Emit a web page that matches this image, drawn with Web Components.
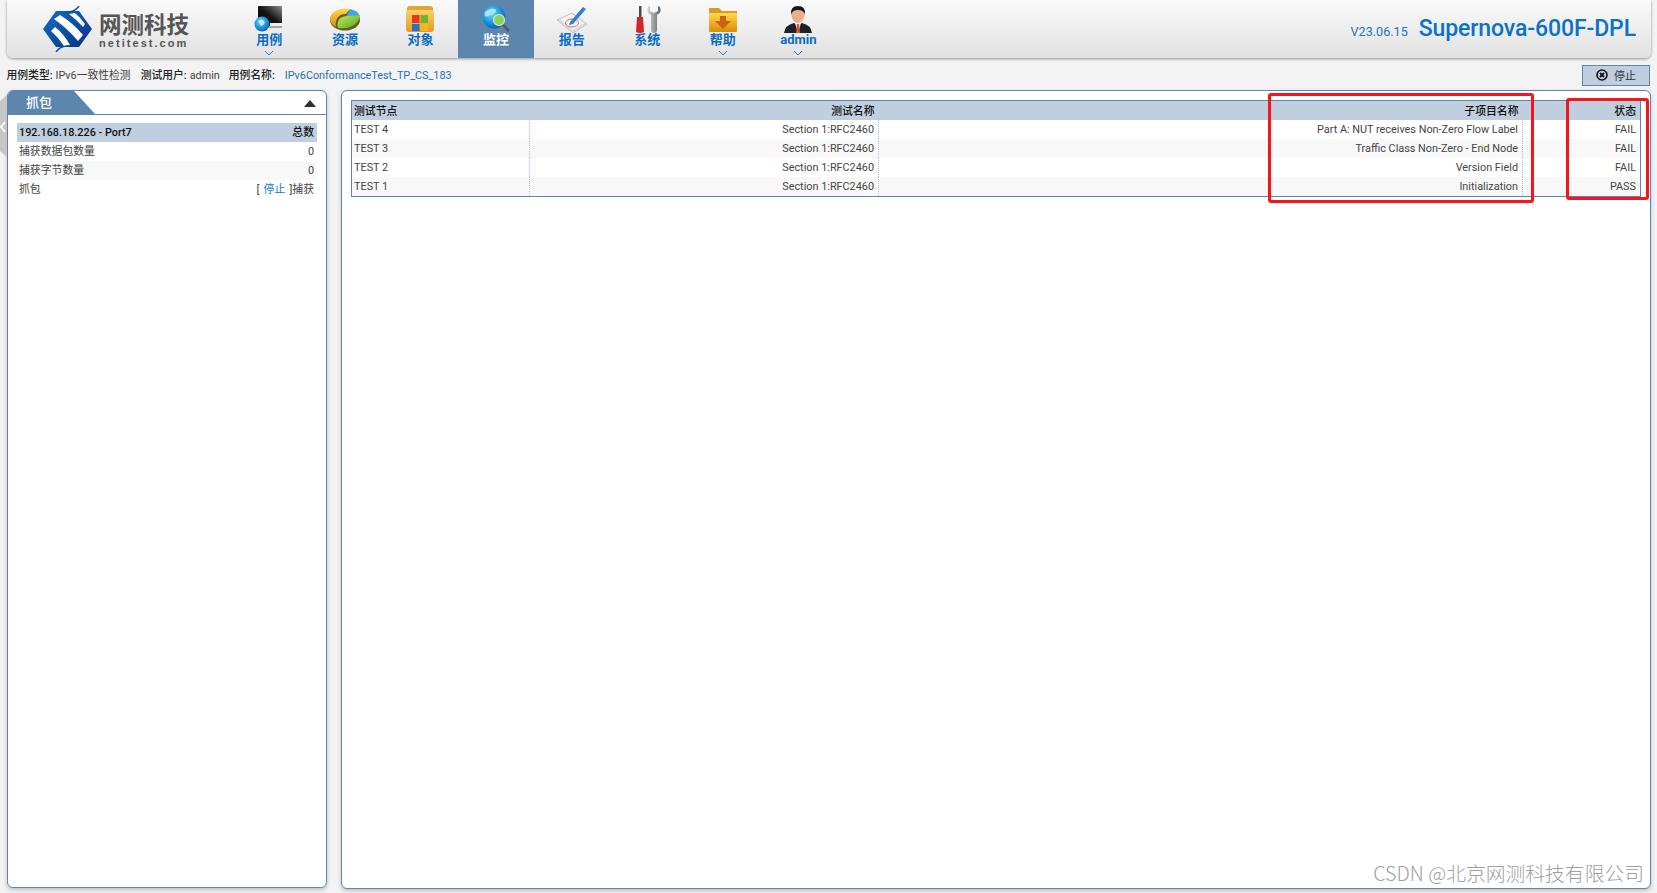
<!DOCTYPE html>
<html lang="zh">
<head>
<meta charset="utf-8">
<title>Supernova</title>
<style>
  html, body { margin: 0; height: 100%; background: #f3f3f3; overflow: hidden; }
  body { font: 10.85px Roboto, "Noto Sans CJK SC", sans-serif; color: #444; }
  svg { display: block; }
</style>
</head>
<body>
<svg width="0" height="0" style="position:absolute">
  <defs>
    <linearGradient id="g-screen" x1="1" y1="0" x2="0" y2="1"><stop offset="0" stop-color="#8a8a8a"/><stop offset=".5" stop-color="#141414"/><stop offset="1" stop-color="#050505"/></linearGradient>
    <radialGradient id="g-globe" cx=".4" cy=".35" r=".7"><stop offset="0" stop-color="#7fd6f7"/><stop offset=".55" stop-color="#1b9be0"/><stop offset="1" stop-color="#0a5aa8"/></radialGradient>
    <linearGradient id="g-gold" x1="0" y1="0" x2="0" y2="1"><stop offset="0" stop-color="#ffd84d"/><stop offset="1" stop-color="#d98c08"/></linearGradient>
    <linearGradient id="g-green" x1="0" y1="0" x2="1" y2="1"><stop offset="0" stop-color="#c6e85a"/><stop offset="1" stop-color="#4da822"/></linearGradient>
    <linearGradient id="g-folder" x1="0" y1="0" x2="0" y2="1"><stop offset="0" stop-color="#fbd06a"/><stop offset="1" stop-color="#e79a1c"/></linearGradient>
    <linearGradient id="g-steel" x1="0" y1="0" x2="1" y2="0"><stop offset="0" stop-color="#d3d8db"/><stop offset="1" stop-color="#59636b"/></linearGradient>
    <linearGradient id="g-logo" x1="0" y1="0" x2="1" y2="1"><stop offset="0" stop-color="#1070c6"/><stop offset="1" stop-color="#0a2f80"/></linearGradient>
  </defs>
</svg>

<app-shell>
  <app-header slot="header" version="V23.06.15" product="Supernova-600F-DPL">
    <svg slot="logo" width="50" height="46" viewBox="0 0 50 46">
      <path d="M13 5H36L49 23 36 41H13L0 23Z" fill="url(#g-logo)"/>
      <path d="M11 13 L17 9 Q30 17 40 29 L35 35 Q24 22 11 13Z" fill="#fff"/>
      <path d="M8 25 L12 21 Q21 28 27 39 L21 40 Q15 31 8 25Z" fill="#fff"/>
      <path d="M26 8 L32 7 Q38 12 42 18 L40 21 Q34 14 26 8Z" fill="#fff"/>
      <path d="M24 6 Q32 6 36 0M25 40 Q17 40 13 46" fill="none" stroke="#0d4f9e" stroke-width="1.4"/>
    </svg>
    <nav-item label="用例" chevron>
      <svg slot="icon" width="32" height="28" viewBox="0 0 32 28">
        <rect x="5" y="1" width="24" height="20" rx="1" fill="url(#g-screen)"/>
        <rect x="17" y="18" width="12" height="3" fill="#eee"/>
        <rect x="11" y="21" width="18" height="2" fill="#a5a5a5"/>
        <circle cx="9" cy="19" r="7.500" fill="url(#g-globe)"/>
        <path d="M5 16q4-3 6 0t-3 5z" fill="#bfe9f8"/>
      </svg>
    </nav-item>
    <nav-item label="资源">
      <svg slot="icon" width="32" height="28" viewBox="0 0 32 28">
        <ellipse cx="16" cy="15" rx="15" ry="10.5" fill="#6b5a1c"/>
        <path d="M1 14C2 6 12 2 21 4 L17 9 C10 9 6 13 7 22 C3 20 1 17 1 14Z" fill="url(#g-gold)"/>
        <path d="M21 4C26 5 29 7 30.500 10 L17 12 Z" fill="#38a9e4"/>
        <path d="M9 23C7 15 12 11 18 11 L31 10 C31 17 23 25 9 23Z" fill="url(#g-green)"/>
      </svg>
    </nav-item>
    <nav-item label="对象">
      <svg slot="icon" width="32" height="28" viewBox="0 0 32 28">
        <path d="M3 4Q3 1 6 1H26Q29 1 29 4V8H3Z" fill="#e7a52b"/>
        <rect x="2" y="5" width="28" height="22" rx="3" fill="url(#g-folder)"/>
        <rect x="8" y="10" width="7.500" height="8" fill="#e2352b"/>
        <rect x="16.500" y="10" width="7.500" height="8" fill="#69b62d"/>
        <rect x="8" y="19" width="7.500" height="7" fill="#2a6fd0"/>
        <rect x="16.500" y="19" width="7.500" height="7" fill="#f4b81c"/>
      </svg>
    </nav-item>
    <nav-item label="监控" active>
      <svg slot="icon" width="32" height="28" viewBox="0 0 32 28">
        <circle cx="14" cy="12" r="11.500" fill="url(#g-globe)"/>
        <path d="M5 7q6-5 10-3t-4 6-6-3z" fill="#a8e3f7"/>
        <circle cx="19" cy="15" r="5.500" fill="#8fd24a" stroke="#cfe6ef" stroke-width="1.200"/>
        <path d="M23 20l6 6" stroke="#4f5e6c" stroke-width="3"/>
      </svg>
    </nav-item>
    <nav-item label="报告">
      <svg slot="icon" width="32" height="28" viewBox="0 0 32 28">
        <path d="M1 15L16 8 31 19 17 28Z" fill="#d9dde0" stroke="#b5babd" stroke-width=".8"/>
        <path d="M4 14L16 9 28 18 17 25Z" fill="#f4f4f4"/>
        <ellipse cx="16" cy="18" rx="6.500" ry="4" fill="none" stroke="#e56a6a" stroke-width="1"/>
        <path d="M14 17L27 2 30 4 17 19 13 20Z" fill="#2f7fd4"/>
      </svg>
    </nav-item>
    <nav-item label="系统">
      <svg slot="icon" width="32" height="28" viewBox="0 0 32 28">
        <rect x="8" y="1" width="2.500" height="11" fill="#4a4a4a"/>
        <path d="M6 12H12L13 27Q9 29 5 27Z" fill="#d2262c"/>
        <path d="M17 2Q15 8 20 10V25Q20 28 23 28 26 28 26 25V10Q31 8 29 2L27 1V6L23 8 19 6V1Z" fill="url(#g-steel)"/>
      </svg>
    </nav-item>
    <nav-item label="帮助" chevron>
      <svg slot="icon" width="32" height="28" viewBox="0 0 32 28">
        <path d="M2 3H12L15 6H30V10H2Z" fill="#d99a22"/>
        <rect x="2" y="8" width="28" height="19" rx="1" fill="url(#g-gold)"/>
        <path d="M13 11H19V16H24L16 24 8 16H13Z" fill="#c9650f"/>
      </svg>
    </nav-item>
    <nav-item label="admin" chevron>
      <svg slot="icon" width="32" height="28" viewBox="0 0 32 28">
        <path d="M2 28Q3 20 12 18L16 20 20 18Q29 20 30 28Z" fill="#1f2225"/>
        <path d="M13 18L16 28 19 18Z" fill="#f4f4f4"/>
        <path d="M15 19H17L18 28H14Z" fill="#d4582a"/>
        <ellipse cx="16" cy="10" rx="6.500" ry="8" fill="#eab08d"/>
        <path d="M9 10Q8 1 16 1 24 1 23 10 22 5 16 5 10 5 9 10Z" fill="#18181a"/>
      </svg>
    </nav-item>
  </app-header>

  <info-bar slot="info">
    <info-field name="用例类型:">IPv6一致性检测</info-field>
    <info-field name="测试用户:">admin</info-field>
    <info-field name="用例名称:" link>IPv6ConformanceTest_TP_CS_183</info-field>
    <stop-button slot="action">停止</stop-button>
  </info-bar>

  <side-panel slot="side" title="抓包">
    <capture-row head label="192.168.18.226 - Port7">总数</capture-row>
    <capture-row label="捕获数据包数量">0</capture-row>
    <capture-row alt label="捕获字节数量">0</capture-row>
    <capture-row label="抓包">[ <a>停止</a> ]捕获</capture-row>
  </side-panel>

  <result-panel slot="main"></result-panel>
</app-shell>

<script>
class AppShell extends HTMLElement {
    constructor() {
        super();
        this.attachShadow({ mode: 'open' });
    }

    connectedCallback() {
        this.shadowRoot.innerHTML = `
          <style>
            :host { display: flex; flex-direction: column; height: 893px; position: relative; }
            .body { display: flex; gap: 14px; height: 799px; margin: 0 6px 0 7px; }
            .handle {
              position: absolute; left: 0; top: 95px; width: 7px; height: 62px;
              background: #c6c6c6; clip-path: polygon(0 6px, 100% 0, 100% 100%, 0 calc(100% - 6px));
            }
            .handle svg { position: absolute; left: 0; top: 26px; display: block; }
          </style>
          <slot name="header"></slot>
          <slot name="info"></slot>
          <div class="body">
            <slot name="side"></slot>
            <slot name="main"></slot>
          </div>
          <div class="handle">
            <svg width="7" height="12" viewBox="0 0 7 12"><path d="M5 1L1 6 5 11" fill="none" stroke="#fff" stroke-width="2"/></svg>
          </div>
        `;
    }
}

class AppHeader extends HTMLElement {
    constructor() {
        super();
        this.attachShadow({ mode: 'open' });
    }

    connectedCallback() {
        this.shadowRoot.innerHTML = `
          <style>
            :host {
              display: flex; align-items: stretch; height: 58px; margin: 0 6px 0 7px;
              background: linear-gradient(#fafafa, #e1e1e1);
              border-radius: 0 0 6px 6px; box-shadow: 0 1px 3px rgba(0, 0, 0, .4);
            }
            .brand { display: flex; align-items: center; width: 224.5px; padding: 0 0 0 36px; box-sizing: border-box; gap: 6px; }
            .brand-text { display: flex; flex-direction: column; color: #555; font-weight: 700; padding-top: 3px; }
            .cn { font-size: 22.5px; line-height: 24px; white-space: nowrap; }
            .en { font: 700 11px/12px "Liberation Sans", sans-serif; letter-spacing: 2.05px; white-space: nowrap; }
            .nav { display: flex; flex: 1; }
            .version { display: flex; align-items: baseline; gap: 11px; padding: 14px 15px 0 0; color: #0b72c4; }
            .ver { font-size: 12.6px; color: #2673b8; }
            .product { font-size: 23px; line-height: 30px; font-weight: 500; letter-spacing: -.1px; }
          </style>
          <div class="brand">
            <slot name="logo"></slot>
            <div class="brand-text"><span class="cn">网测科技</span><span class="en">netitest.com</span></div>
          </div>
          <div class="nav"><slot></slot></div>
          <div class="version">
            <span class="ver">${this.getAttribute('version')}</span>
            <span class="product">${this.getAttribute('product')}</span>
          </div>
        `;
    }
}

class NavItem extends HTMLElement {
    constructor() {
        super();
        this.attachShadow({ mode: 'open' });
    }

    connectedCallback() {
        const chevron = this.hasAttribute('chevron')
            ? '<svg class="chev" width="10" height="6" viewBox="0 0 10 6"><path d="M1 1l4 4 4-4" fill="none" stroke="#2a7cc8" stroke-width="1"/></svg>'
            : '';
        this.shadowRoot.innerHTML = `
          <style>
            :host {
              display: flex; flex-direction: column; align-items: center; float: left;
              width: 75.6px; height: 58px; padding-top: 5px; box-sizing: border-box;
              font: 700 13px/15px Roboto, "Noto Sans CJK SC", sans-serif; color: #0a6cc2;
            }
            :host([active]) { background: #5d86ae; color: #fff; }
            .icon { height: 27px; }
            .chev { display: block; margin-top: 3px; }
          </style>
          <div class="icon"><slot name="icon"></slot></div>
          <span>${this.getAttribute('label')}</span>
          ${chevron}
        `;
    }
}

class InfoBar extends HTMLElement {
    constructor() {
        super();
        this.attachShadow({ mode: 'open' });
    }

    connectedCallback() {
        this.shadowRoot.innerHTML = `
          <style>
            :host {
              display: flex; align-items: center; justify-content: space-between;
              height: 32px; margin: 0 7px 0 6.5px; padding-top: 1px; box-sizing: border-box;
            }
            .fields { display: flex; gap: 9px; margin-top: 2px; }
          </style>
          <div class="fields"><slot></slot></div>
          <slot name="action"></slot>
        `;
    }
}

class InfoField extends HTMLElement {
    constructor() {
        super();
        this.attachShadow({ mode: 'open' });
    }

    connectedCallback() {
        const valueColor = this.hasAttribute('link') ? '#1f6fbd' : '#444';
        const gap = this.hasAttribute('link') ? '10px' : '3px';
        this.shadowRoot.innerHTML = `
          <style>
            :host { display: flex; gap: ${gap}; font-size: 10.8px; line-height: 14px; white-space: nowrap; }
            b { font-weight: 500; color: #222; }
            span { color: ${valueColor}; }
            :host(:nth-of-type(2)) { margin-left: 1px; }
          </style>
          <b>${this.getAttribute('name')}</b><span><slot></slot></span>
        `;
    }
}

class StopButton extends HTMLElement {
    constructor() {
        super();
        this.attachShadow({ mode: 'open' });
    }

    connectedCallback() {
        this.shadowRoot.innerHTML = `
          <style>
            :host {
              display: flex; align-items: center; justify-content: center; gap: 6px;
              width: 68px; height: 21px; box-sizing: border-box; margin-top: 1px;
              background: #bfcfe0; border: 1px solid #5d86ae; color: #333; font-size: 11px;
            }
          </style>
          <svg width="12" height="12" viewBox="0 0 12 12" style="display:block">
            <circle cx="6" cy="6" r="5" fill="none" stroke="#111" stroke-width="1.600"/>
            <path d="M4 4l4 4M8 4l-4 4" stroke="#111" stroke-width="1.800"/>
          </svg>
          <slot></slot>
        `;
    }
}

class SidePanel extends HTMLElement {
    constructor() {
        super();
        this.attachShadow({ mode: 'open' });
    }

    connectedCallback() {
        this.shadowRoot.innerHTML = `
          <style>
            :host {
              display: block; width: 320px; height: 798px; box-sizing: border-box;
              background: #fff; border: 1px solid #5d86ae; border-radius: 6px;
              box-shadow: 0 2px 4px rgba(0, 0, 0, .22); overflow: hidden;
            }
            .bar { display: flex; align-items: center; justify-content: space-between; height: 23px; border-bottom: 1px solid #5d86ae; padding-right: 10px; }
            .tab {
              width: 87px; height: 23px; box-sizing: border-box; padding-left: 18px;
              background: #5d86ae; color: #fff; font-size: 13px; font-weight: 500; line-height: 24px;
              clip-path: polygon(0 0, 66px 0, 87px 100%, 0 100%);
            }
            .tri { width: 0; height: 0; margin-top: 1px; border: 6.500px solid transparent; border-top: 0; border-bottom: 7px solid #2f2f2f; }
            .rows { padding: 8px 9px 0; }
          </style>
          <div class="bar">
            <div class="tab">${this.getAttribute('title')}</div>
            <div class="tri"></div>
          </div>
          <div class="rows"><slot></slot></div>
        `;
    }
}

class CaptureRow extends HTMLElement {
    constructor() {
        super();
        this.attachShadow({ mode: 'open' });
    }

    connectedCallback() {
        this.shadowRoot.innerHTML = `
          <style>
            :host {
              display: flex; justify-content: space-between; height: 19px; padding: 0 3px 0 2px;
              font-size: 10.85px; line-height: 20px; color: #444;
            }
            :host([alt]) { background: #f8f8f8; }
            :host([head]) { background: #bfcfe0; color: #111; font-weight: 500; }
            ::slotted(a) { color: #0a7cd0; padding: 0 1.5px; }
          </style>
          <span>${this.getAttribute('label')}</span>
          <span><slot></slot></span>
        `;
    }
}

class ResultPanel extends HTMLElement {
    constructor() {
        super();
        this.attachShadow({ mode: 'open' });
    }

    connectedCallback() {
        const rows = [
            ['TEST 4', 'Section 1:RFC2460', 'Part A: NUT receives Non-Zero Flow Label', 'FAIL'],
            ['TEST 3', 'Section 1:RFC2460', 'Traffic Class Non-Zero - End Node', 'FAIL'],
            ['TEST 2', 'Section 1:RFC2460', 'Version Field', 'FAIL'],
            ['TEST 1', 'Section 1:RFC2460', 'Initialization', 'PASS']
        ];
        const body = rows.map(r => `<tr>${r.map(c => `<td>${c}</td>`).join('')}</tr>`).join('');

        this.shadowRoot.innerHTML = `
          <style>
            :host {
              display: block; flex: 1; height: 799px; box-sizing: border-box; position: relative;
              padding: 9px 9px 0 9px; background: #fff; border: 1px solid #5d86ae; border-radius: 6px;
              box-shadow: 0 2px 4px rgba(0, 0, 0, .22);
            }
            table { width: 100%; table-layout: fixed; border-collapse: collapse; border: 1px solid #5d86ae; font-size: 10.85px; }
            th { height: 19px; padding: 0 4px 1px 2px; box-sizing: border-box; background: #bfcfe0; color: #111; font-weight: 500; text-align: right; }
            td { height: 19px; padding: 0 4px 0 2px; color: #444; text-align: right; border-right: 1px dotted #a9c0d8; }
            th:first-child, td:first-child { text-align: left; }
            td:last-child { border-right: 0; }
            tr:nth-child(even) td { background: #f8f8f8; }
            .mark { position: absolute; box-sizing: border-box; border: 3px solid #f5161b; border-radius: 3px; }
            .one { left: 926px; top: 2px; width: 266px; height: 110px; }
            .two { left: 1224px; top: 7px; width: 83px; height: 102px; }
            .wm {
              position: absolute; right: 6px; bottom: 2px; font: 300 19.800px/26px "Noto Sans CJK SC", sans-serif;
              color: #a0a0a0; white-space: nowrap;
            }
          </style>
          <table>
            <colgroup><col style="width:178px"><col style="width:349px"><col style="width:644px"><col></colgroup>
            <thead><tr><th>测试节点</th><th>测试名称</th><th>子项目名称</th><th>状态</th></tr></thead>
            <tbody>${body}</tbody>
          </table>
          <div class="mark one"></div>
          <div class="mark two"></div>
          <div class="wm">CSDN @北京网测科技有限公司</div>
        `;
    }
}

customElements.define('app-shell', AppShell);
customElements.define('app-header', AppHeader);
customElements.define('nav-item', NavItem);
customElements.define('info-bar', InfoBar);
customElements.define('info-field', InfoField);
customElements.define('stop-button', StopButton);
customElements.define('side-panel', SidePanel);
customElements.define('capture-row', CaptureRow);
customElements.define('result-panel', ResultPanel);
</script>
</body>
</html>
